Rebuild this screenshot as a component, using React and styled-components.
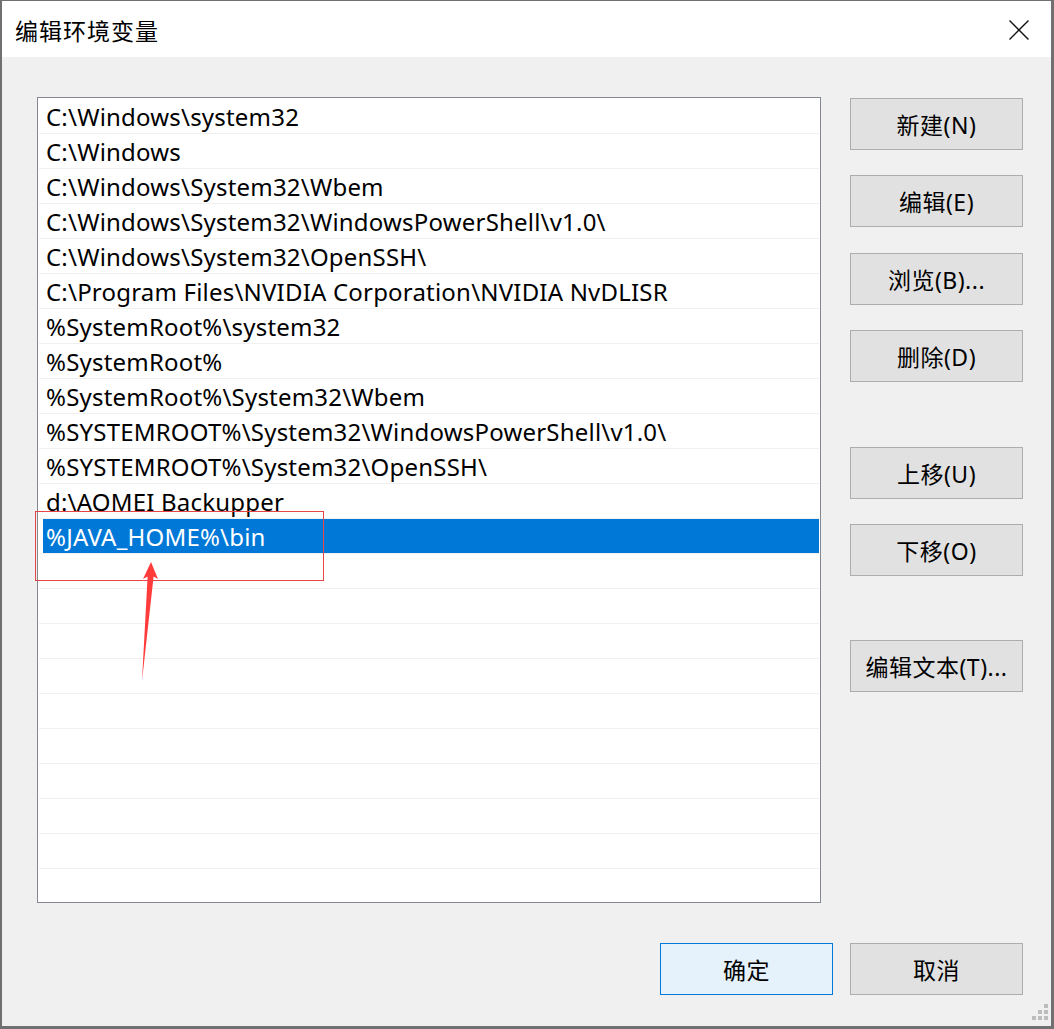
import React from 'react'
import styled, { createGlobalStyle } from 'styled-components';

const GlobalStyle = createGlobalStyle`
  html, body {
    margin: 0;
    padding: 0;
    background: #ffffff;
  }
  body {
    font-family: "Noto Sans", "Noto Sans CJK SC", sans-serif;
  }
`;

const paths = [
  'C:\\Windows\\system32',
  'C:\\Windows',
  'C:\\Windows\\System32\\Wbem',
  'C:\\Windows\\System32\\WindowsPowerShell\\v1.0\\',
  'C:\\Windows\\System32\\OpenSSH\\',
  'C:\\Program Files\\NVIDIA Corporation\\NVIDIA NvDLISR',
  '%SystemRoot%\\system32',
  '%SystemRoot%',
  '%SystemRoot%\\System32\\Wbem',
  '%SYSTEMROOT%\\System32\\WindowsPowerShell\\v1.0\\',
  '%SYSTEMROOT%\\System32\\OpenSSH\\',
  'd:\\AOMEI Backupper',
  '%JAVA_HOME%\\bin',
];

const TOTAL_ROWS = 23;
const SELECTED = 12;

// side buttons, with the space above each one
const actions = [
  { label: '新建(N)', gap: 0 },
  { label: '编辑(E)', gap: 25 },
  { label: '浏览(B)...', gap: 26 },
  { label: '删除(D)', gap: 25 },
  { label: '上移(U)', gap: 65 },
  { label: '下移(O)', gap: 25 },
  { label: '编辑文本(T)...', gap: 64 },
];

const App = () => {
  const rows = Array.from({ length: TOTAL_ROWS }, (_, i) => paths[i] || '');

  return (
    <>
      <GlobalStyle />
      <Window>
        <TitleBar>
          <Title>编辑环境变量</Title>
          <CloseButton>
            <svg width="20" height="20" viewBox="0 0 20 20">
              <path d="M0.5 0.5 L19.5 19.5 M19.5 0.5 L0.5 19.5" stroke="#111" strokeWidth="1.4" fill="none" />
            </svg>
          </CloseButton>
        </TitleBar>

        <Body>
          <Main>
            <ListBox>
              {rows.map((text, i) => (
                <Row key={i}>
                  {i === SELECTED ? <Selected>{text}</Selected> : <Cell>{text}</Cell>}
                </Row>
              ))}
            </ListBox>

            <Actions>
              {actions.map((a) => (
                <Button key={a.label} $gap={a.gap}>{a.label}</Button>
              ))}
            </Actions>
          </Main>

          <Footer>
            <Button $primary>确定</Button>
            <Button>取消</Button>
          </Footer>
        </Body>

        <Grip>
          <svg width="16" height="16" viewBox="0 0 16 16">
            <rect x="12" y="0" width="4" height="4" fill="#bcbcbc" />
            <rect x="6" y="6" width="4" height="4" fill="#bcbcbc" />
            <rect x="12" y="6" width="4" height="4" fill="#bcbcbc" />
            <rect x="0" y="12" width="4" height="4" fill="#bcbcbc" />
            <rect x="6" y="12" width="4" height="4" fill="#bcbcbc" />
            <rect x="12" y="12" width="4" height="4" fill="#bcbcbc" />
          </svg>
        </Grip>

        {/* red marker box and arrow drawn over the list */}
        <Markup width="1054" height="1029" viewBox="0 0 1054 1029">
          <rect x="35.5" y="511.5" width="288" height="69" fill="none" stroke="#e64646" strokeWidth="1" />
          <path d="M151 562 L158 579 L153.6 576.5 L142 681 L147.6 576.5 L143 579 Z" fill="#ff3b3b" />
        </Markup>
      </Window>
    </>
  )
}

const Window = styled.div`
  position: relative;
  width: 1054px;
  height: 1029px;
  box-sizing: border-box;
  border-style: solid;
  border-color: #707070;
  border-width: 1px 3px 3px 2px;
  background: #f0f0f0;
  display: flex;
  flex-direction: column;
  overflow: hidden;
`;

const TitleBar = styled.div`
  height: 56px;
  background: #ffffff;
  display: flex;
  align-items: center;
  justify-content: space-between;
  padding: 0 22px 0 13px;
  flex-shrink: 0;
`;

const Title = styled.div`
  font-family: "Noto Sans CJK SC", sans-serif;
  font-size: 23px;
  color: #000;
  letter-spacing: 1px;
  margin-top: 2px;
`;

const CloseButton = styled.div`
  width: 20px;
  height: 20px;
  display: flex;
  margin-top: 2px;
`;

const Body = styled.div`
  flex: 1;
  display: flex;
  flex-direction: column;
  padding: 40px 28px 0 35px;
`;

const Main = styled.div`
  display: flex;
  align-items: flex-start;
`;

const ListBox = styled.div`
  width: 784px;
  height: 806px;
  box-sizing: border-box;
  border: 1px solid #828790;
  background: #ffffff;
  padding: 1px 1px 0 1px;
  overflow: hidden;
`;

const Row = styled.div`
  height: 35px;
  box-sizing: border-box;
  border-bottom: 1px solid #f0f0f0;
  display: flex;
`;

const Cell = styled.div`
  flex: 1;
  padding-left: 7px;
  display: flex;
  align-items: center;
  font-size: 24px;
  letter-spacing: 0.2px;
  color: #000;
  white-space: nowrap;
`;

const Selected = styled(Cell)`
  margin-left: 4px;
  padding-left: 3px;
  background: #0078d7;
  color: #ffffff;
`;

const Actions = styled.div`
  display: flex;
  flex-direction: column;
  margin-left: 29px;
  margin-top: 1px;
`;

const Button = styled.div`
  width: 173px;
  height: 52px;
  box-sizing: border-box;
  margin-top: ${(p) => p.$gap || 0}px;
  border: 1px solid ${(p) => (p.$primary ? '#0078d7' : '#adadad')};
  background: ${(p) => (p.$primary ? '#e5f1fb' : '#e1e1e1')};
  display: flex;
  align-items: center;
  justify-content: center;
  font-family: "Noto Sans", "Noto Sans CJK SC", sans-serif;
  font-size: 23px;
  letter-spacing: 0.5px;
  color: #000;
  white-space: nowrap;
`;

const Footer = styled.div`
  display: flex;
  justify-content: flex-end;
  gap: 17px;
  margin-top: 40px;
`;

const Grip = styled.div`
  position: absolute;
  right: 3px;
  bottom: 6px;
  width: 16px;
  height: 16px;
  display: flex;
`;

const Markup = styled.svg`
  position: absolute;
  left: -2px;
  top: -1px;
  pointer-events: none;
`;

export default App
